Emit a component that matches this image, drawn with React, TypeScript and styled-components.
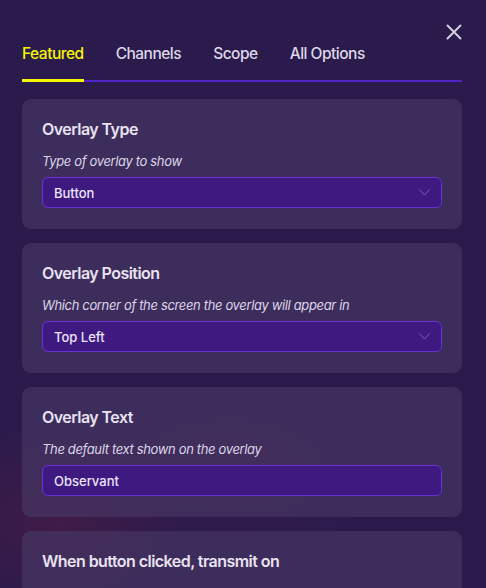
import React from "react";
import styled, { createGlobalStyle } from "styled-components";

const Global = createGlobalStyle`
  html, body {
    margin: 0;
    padding: 0;
    height: 100%;
    background: #2b1b4c;
  }
  body {
    font-family: Inter, "Noto Sans", sans-serif;
    overflow: hidden;
  }
`;

const Page = styled.div`
  position: relative;
  width: 486px;
  height: 588px;
  box-sizing: border-box;
  padding: 44px 24px 0 22px;
  background:
    radial-gradient(ellipse 180px 140px at 60px 520px, rgba(120, 30, 60, 0.28), transparent 70%),
    radial-gradient(ellipse 220px 120px at 230px 470px, rgba(110, 40, 80, 0.18), transparent 70%),
    #2b1b4c;
  overflow: hidden;
`;

const CloseButton = styled.button`
  position: absolute;
  top: 22px;
  right: 22px;
  width: 20px;
  height: 20px;
  padding: 0;
  border: none;
  background: transparent;
  display: flex;
  align-items: center;
  justify-content: center;
  cursor: pointer;
`;

const Tabs = styled.div`
  display: flex;
  border-bottom: 2px solid #5224c8;
  margin-bottom: 17px;
`;

const Tab = styled.div<{ $active?: boolean }>`
  position: relative;
  font-size: 15.5px;
  line-height: 20px;
  font-weight: 500;
  letter-spacing: -0.5px;
  color: ${(p) => (p.$active ? "#f6f600" : "#ddd6e8")};
  padding-bottom: 16px;
  margin-right: 32px;
  &::after {
    content: "";
    display: ${(p) => (p.$active ? "block" : "none")};
    position: absolute;
    left: 0;
    right: 0;
    bottom: -2px;
    height: 3px;
    background: #f6f600;
  }
`;

const List = styled.div`
  display: flex;
  flex-direction: column;
  gap: 14px;
`;

const Card = styled.div`
  background: rgba(72, 56, 102, 0.62);
  border-radius: 9px;
  padding: 20px 20px 21px 20px;
  display: flex;
  flex-direction: column;
`;

const Title = styled.div`
  font-size: 16px;
  line-height: 20px;
  font-weight: 600;
  letter-spacing: -0.55px;
  color: #e9e3f1;
  margin-bottom: 14px;
`;

const Desc = styled.div`
  font-size: 13px;
  line-height: 16px;
  font-style: italic;
  letter-spacing: -0.35px;
  color: #dcd4e8;
  margin-bottom: 8px;
`;

const Field = styled.div`
  height: 31px;
  box-sizing: border-box;
  border: 1px solid #6832d8;
  border-radius: 6px;
  background: #3e1a80;
  display: flex;
  align-items: center;
  justify-content: space-between;
  padding: 0 11px 0 11px;
  font-size: 13px;
  font-weight: 500;
  color: #ebe4f6;
`;

const Chevron = () => (
  <svg width="11" height="7" viewBox="0 0 11 7" fill="none">
    <path d="M0.5 0.5 L5.5 6 L10.5 0.5" stroke="#7d62b4" strokeWidth="1" />
  </svg>
);

type Item = { title: string; desc?: string; value?: string; select?: boolean };

const items: Item[] = [
  { title: "Overlay Type", desc: "Type of overlay to show", value: "Button", select: true },
  {
    title: "Overlay Position",
    desc: "Which corner of the screen the overlay will appear in",
    value: "Top Left",
    select: true,
  },
  { title: "Overlay Text", desc: "The default text shown on the overlay", value: "Observant" },
  { title: "When button clicked, transmit on" },
];

export default function App() {
  return (
    <>
      <Global />
      <Page>
        <CloseButton aria-label="Close">
          <svg width="16" height="16" viewBox="0 0 16 16">
            <path d="M1.5 1.5 L14.5 14.5 M14.5 1.5 L1.5 14.5" stroke="#d4cde0" strokeWidth="2" strokeLinecap="round" />
          </svg>
        </CloseButton>
        <Tabs>
          <Tab $active>Featured</Tab>
          <Tab>Channels</Tab>
          <Tab>Scope</Tab>
          <Tab>All Options</Tab>
        </Tabs>
        <List>
          {items.map((it) => (
            <Card key={it.title}>
              <Title>{it.title}</Title>
              {it.desc && <Desc>{it.desc}</Desc>}
              {it.value !== undefined && (
                <Field>
                  <span>{it.value}</span>
                  {it.select && <Chevron />}
                </Field>
              )}
            </Card>
          ))}
        </List>
      </Page>
    </>
  );
}
